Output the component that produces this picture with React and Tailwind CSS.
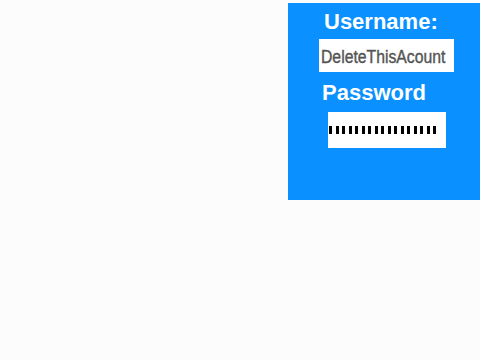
import React from 'react'

export default function App() {
  const dots = Array.from({ length: 17 })
  return (
    <div className="w-full h-[360px] bg-[#fcfcfc] flex justify-end pt-[3px]" style={{ fontFamily: '"Liberation Sans", Arial, sans-serif' }}>
      <div className="w-[192px] h-[197px] bg-[#0a90ff] flex flex-col">
        <div className="pl-[36px] mt-[6px] text-[22px] font-bold text-white leading-[26px]">Username:</div>
        <div className="ml-[31px] mt-[4px] w-[135px] h-[33px] bg-white flex items-center pl-[2px] pt-[3px]">
          <span className="inline-block origin-left scale-x-[0.875] text-[18px] text-[#555] leading-none [-webkit-text-stroke:0.4px_#555] whitespace-nowrap">DeleteThisAcount</span>
        </div>
        <div className="pl-[34px] mt-[8px] text-[22px] font-bold text-white leading-[26px]">Password</div>
        <div className="ml-[40px] mt-[6px] w-[118px] h-[36px] bg-white flex items-center pl-[1px] gap-[3.5px]">
          {dots.map((_, i) => (
            <span key={i} className="w-[3px] h-[8px] bg-black" />
          ))}
        </div>
      </div>
    </div>
  )
}
